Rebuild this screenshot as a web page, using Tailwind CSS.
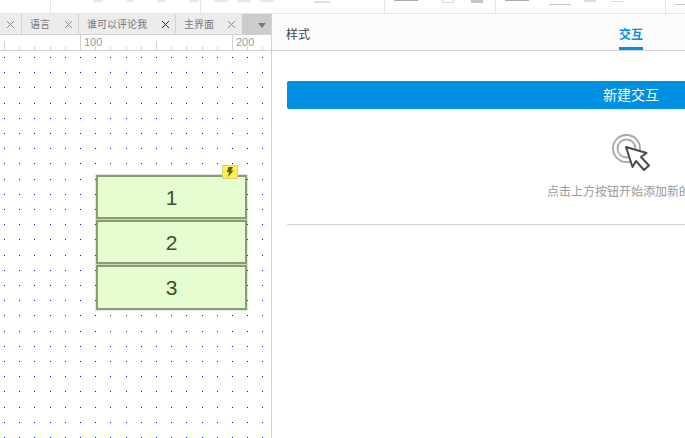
<!DOCTYPE html>
<html lang="en">
  <head>
    <meta charset="UTF-8" />
    <title>交互</title>
    <script src="https://cdn.jsdelivr.net/npm/@tailwindcss/browser@4"></script>
  </head>
  <body class="w-[685px] h-[438px] overflow-hidden bg-white font-['Liberation_Sans','Noto_Sans_CJK_SC',sans-serif]">
    <!-- toolbar, cut off by the window -->
    <div class="flex h-[14px] border-b border-[#e4e4e4] bg-white overflow-hidden">
      <div class="w-[51px] border-r border-[#e4e4e4]"></div>
      <div class="w-[150px] border-r border-[#e4e4e4] flex gap-[24px] pl-[42px] pt-0">
        <span class="w-[10px] h-[2px] bg-[#e8e8e8]"></span>
        <span class="w-[6px] h-[2px] bg-[#e8e8e8]"></span>
        <span class="w-[8px] h-[2px] bg-[#e8e8e8]"></span>
        <span class="w-[10px] h-[2px] bg-[#e8e8e8]"></span>
      </div>
      <div class="w-[185px] border-r border-[#e4e4e4] flex gap-[9px] pl-[13px]">
        <span class="w-[14px] h-[2px] bg-[#e8e8e8]"></span>
        <span class="w-[14px] h-[2px] bg-[#e8e8e8]"></span>
        <span class="w-[14px] h-[2px] bg-[#e8e8e8]"></span>
        <span class="ml-[31px] w-[16px] h-[2px] mt-[1px] bg-[#dedede]"></span>
      </div>
      <div class="w-[111px] border-r border-[#e4e4e4] flex pl-[9px]">
        <span class="w-[24px] h-[1px] bg-[#aaaaaa]"></span>
        <span class="ml-[24px] w-[12px] h-[3px] border border-t-0 border-[#d8d8d8]"></span>
        <span class="ml-[17px] w-[12px] h-[3px] bg-[#c4c4c4]"></span>
      </div>
      <div class="w-[170px] border-r border-[#e4e4e4] flex pl-[9px]">
        <span class="w-[24px] h-[1px] bg-[#aaaaaa]"></span>
        <span class="ml-[20px] w-[22px] h-[1px] mt-[4px] bg-[#c8c8c8]"></span>
        <span class="ml-[13px] w-[12px] h-[2px] bg-[#dcdcdc]"></span>
        <span class="ml-[15px] w-[13px] h-[1px] mt-[1px] bg-[#dcdcdc]"></span>
      </div>
      <div class="flex-1 pl-[9px]"><span class="block w-[10px] h-[1px] mt-[4px] bg-[#c8c8c8]"></span></div>
    </div>

    <div class="flex h-[424px]">
      <!-- left: page canvas -->
      <div class="w-[272px] shrink-0 border-r border-[#d2d2d2] flex flex-col">
        <div class="flex h-[21px] bg-[#ececec] border-b border-[#d2d2d2] text-[10px] text-[#777]">
          <div class="w-[22px] border-r border-[#d2d2d2] flex items-center justify-center">
            <svg class="w-[7px] h-[7px]" viewBox="0 0 7 7"><path d="M0 0L7 7M7 0L0 7" stroke="#8a8a8a" fill="none" /></svg>
          </div>
          <div class="w-[57px] border-r border-[#d2d2d2] flex items-center justify-between pl-[8px] pr-[6px]">
            <span>语言</span>
            <svg class="w-[7px] h-[7px]" viewBox="0 0 7 7"><path d="M0 0L7 7M7 0L0 7" stroke="#8a8a8a" fill="none" /></svg>
          </div>
          <div class="w-[97px] border-r border-[#d2d2d2] flex items-center justify-between pl-[8px] pr-[6px]">
            <span>谁可以评论我</span>
            <svg class="w-[7px] h-[7px]" viewBox="0 0 7 7"><path d="M0 0L7 7M7 0L0 7" stroke="#333" fill="none" /></svg>
          </div>
          <div class="w-[66px] flex items-center justify-between pl-[8px] pr-[7px]">
            <span>主界面</span>
            <svg class="w-[7px] h-[7px]" viewBox="0 0 7 7"><path d="M0 0L7 7M7 0L0 7" stroke="#8a8a8a" fill="none" /></svg>
          </div>
          <div class="flex-1 bg-[#cccccc] flex items-center justify-center pt-[3px] pl-[11px]">
            <svg class="w-[8px] h-[5px]" viewBox="0 0 8 5"><path d="M0 0H8L4 5Z" fill="#777" /></svg>
          </div>
        </div>

        <div class="relative h-[16px] border-b border-[#d2d2d2] text-[11px] leading-[14px] text-[#999]">
          <svg class="absolute inset-0 w-[271px] h-[15px]" shape-rendering="crispEdges"><path id="ticks" stroke="#d2d2d2" fill="none" /></svg>
          <span class="absolute left-[84px] top-0">100</span>
          <span class="absolute left-[236px] top-0">200</span>
        </div>

        <div class="relative flex-1 pt-[124px] pl-[96px]">
          <svg class="absolute inset-0 w-[271px] h-[387px]" shape-rendering="crispEdges"><path id="dots" fill="#0000ff" /></svg>
          <div class="relative flex flex-col gap-[1px] w-[151px] text-[21px] text-[#3a5030]">
            <div class="h-[44px] pt-[1px] flex items-center justify-center bg-[#e5fdd0] border-2 border-[#8a9d72] shadow-[0_0_0_1px_rgba(140,159,116,0.25)]">1</div>
            <div class="h-[44px] pt-[1px] flex items-center justify-center bg-[#e5fdd0] border-2 border-[#8a9d72] shadow-[0_0_0_1px_rgba(140,159,116,0.25)]">2</div>
            <div class="h-[45px] flex items-center justify-center bg-[#e5fdd0] border-2 border-[#8a9d72] shadow-[0_0_0_1px_rgba(140,159,116,0.25)]">3</div>
            <div class="absolute -top-[10px] left-[126px] w-[16px] h-[14px] bg-[#fff04a] border border-[#d9d27c] flex items-center justify-center">
              <svg class="w-[8px] h-[10px]" viewBox="0 0 8 10"><path d="M2.5 0H7L5 3.5H7.5L2 10L3 5H.8Z" fill="#5d5a35" /></svg>
            </div>
          </div>
        </div>
      </div>

      <!-- right: interaction panel -->
      <div class="flex-1 min-w-0 overflow-hidden flex flex-col">
        <div class="flex h-[37px] bg-[#fbfbfb] border-b border-[#d2d2d2] text-[12px] pl-[14px]">
          <div class="pt-[12px] text-[#444]">样式</div>
          <div class="ml-[309px] h-[36px] pt-[12px] border-b-[3px] border-[#0090e2] text-[#0090e2] font-bold">交互</div>
        </div>
        <div class="w-[688px] ml-[15px] pt-[30px] flex flex-col items-center">
          <button class="w-full h-[28px] rounded-[2px] bg-[#0090e2] text-[14px] text-white">新建交互</button>
          <svg class="mt-[25px] w-[38px] h-[38px]" viewBox="0 0 38 38">
            <circle cx="14.5" cy="14.5" r="13.5" fill="none" stroke="#a8a8a8" stroke-width="1.8" />
            <circle cx="14.5" cy="14.5" r="9" fill="none" stroke="#a8a8a8" stroke-width="1.8" />
            <path d="M14 13L20.5 33L24 27L32 36L37 31.5L29 23L34.5 19Z" fill="#fff" stroke="#4a4a4a" stroke-width="2" stroke-linejoin="round" />
          </svg>
          <p class="mt-[12px] text-[12px] leading-[16px] text-[#999]">点击上方按钮开始添加新的交互</p>
          <div class="mt-[24px] w-full border-t border-[#d2d2d2]"></div>
        </div>
      </div>
    </div>

    <script>
      // ruler ticks and grid dots sit on a 15.2px step
      let ticks = "";
      let dots = "";
      for (let i = 0; i < 18; i++) {
        let x = Math.round(4 + i * 15.2);
        let top = 11;
        if (x === 80 || x === 232) top = 0;
        if (x === 4 || x === 156) top = 6;
        ticks += `M${x}.5 ${top}V15`;
        for (let j = 0; j < 26; j++) {
          dots += `M${x} ${Math.round(6 + j * 15.2)}h1v1h-1z`;
        }
      }
      document.getElementById("ticks").setAttribute("d", ticks);
      document.getElementById("dots").setAttribute("d", dots);
    </script>
  </body>
</html>
